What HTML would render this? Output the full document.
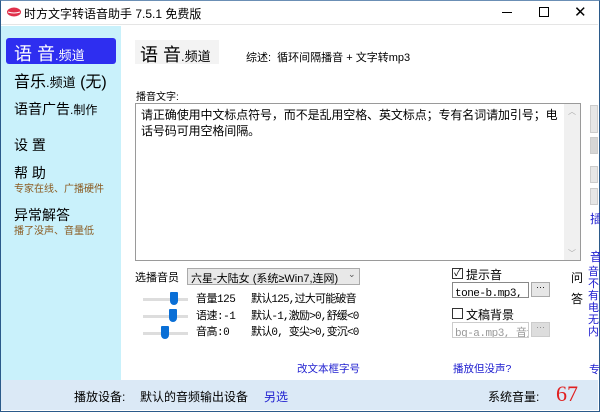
<!DOCTYPE html>
<html><head><meta charset="utf-8"><style>
*{margin:0;padding:0;box-sizing:border-box}
body{width:600px;height:412px;overflow:hidden;background:#fff;font-family:"Liberation Sans","Noto Sans CJK SC",sans-serif;position:relative;color:#000}
.a{position:absolute;white-space:nowrap}
.s{font-family:"Liberation Mono","Noto Sans CJK SC",monospace}
</style></head><body>
<div class="a" style="left:0;top:0;width:600px;height:412px;border:1px solid #2b5a8a;border-top:1px solid #6b8fb5"></div>
<div class="a" style="left:1px;top:1px;width:597px;height:24px;background:#fff;border-bottom:1px solid #e5e5e5"></div>
<svg class="a" style="left:7px;top:7px" width="14" height="10" viewBox="0 0 14 10"><ellipse cx="7" cy="5" rx="7" ry="4.5" fill="#e0304a"/><path d="M1 5 Q7 7 13 5" stroke="#fff" stroke-width="1" fill="none"/></svg>
<div class="a" style="left:24px;top:5px;font-size:12px">时方文字转语音助手 7.5.1 免费版</div>
<div class="a" style="left:502px;top:12px;width:10px;height:1px;background:#000"></div>
<div class="a" style="left:539px;top:7px;width:10px;height:10px;border:1px solid #000"></div>
<div class="a" style="left:574px;top:3px;font-size:15px;font-weight:300">✕</div>

<div class="a" style="left:1px;top:26px;width:120px;height:354px;background:#c9f1fb"></div>
<div class="a" style="left:6px;top:38px;width:110px;height:26px;background:#2e2ef0;border-radius:3px"></div>
<div class="a" style="left:14px;top:40px;font-size:18px;color:#fff">语 音<span style="font-size:13px">.频道</span></div>
<div class="a" style="left:14px;top:68px;font-size:16px">音乐<span style="font-size:13px">.频道</span> (无)</div>
<div class="a" style="left:14px;top:99px;font-size:14px">语音广告<span style="font-size:12px">.制作</span></div>
<div class="a" style="left:14px;top:135px;font-size:14px">设 置</div>
<div class="a" style="left:14px;top:163px;font-size:14px">帮 助</div>
<div class="a" style="left:14px;top:180px;font-size:10px;color:#8a5a20">专家在线、广播硬件</div>
<div class="a" style="left:14px;top:205px;font-size:14px">异常解答</div>
<div class="a" style="left:14px;top:222px;font-size:10px;color:#8a5a20">播了没声、音量低</div>

<div class="a" style="left:135px;top:40px;width:84px;height:24px;background:#f3f3f3"></div>
<div class="a" style="left:140px;top:41px;font-size:18px">语 音<span style="font-size:13px">.频道</span></div>
<div class="a" style="left:246px;top:49px;font-size:11px">综述:&nbsp; 循环间隔播音 + 文字转mp3</div>
<div class="a" style="left:136px;top:88px;font-size:10px">播音文字:</div>
<div class="a" style="left:135px;top:103px;width:446px;height:158px;border:1px solid #9a9a9a;background:#fff"></div>
<div class="a" style="left:564px;top:104px;width:16px;height:156px;background:#f0f0f0"></div>
<div class="a" style="left:568px;top:106px;font-size:8px;color:#aaa">︿</div>
<div class="a" style="left:568px;top:248px;font-size:8px;color:#aaa">﹀</div>
<div class="a" style="left:141px;top:107px;font-size:12px;line-height:16px;width:424px;white-space:normal;letter-spacing:-0.1px">请正确使用中文标点符号，而不是乱用空格、英文标点；专有名词请加引号；电话号码可用空格间隔。</div>
<div class="a" style="left:590px;top:105px;width:8px;height:28px;background:#e6e6e6;border:1px solid #ccc"></div>
<div class="a" style="left:590px;top:137px;width:8px;height:17px;background:#d6d6d6;border:1px solid #ccc"></div>
<div class="a" style="left:590px;top:166px;width:8px;height:17px;background:#e6e6e6;border:1px solid #ccc"></div>
<div class="a" style="left:590px;top:188px;width:8px;height:17px;background:#e6e6e6;border:1px solid #ccc"></div>
<div class="a" style="left:590px;top:210px;font-size:12px;color:#2020d0">插</div>
<div class="a" style="left:590px;top:248px;font-size:12px;color:#2020d0">音</div>

<div class="a" style="left:135px;top:269px;font-size:11px">选播音员</div>
<div class="a" style="left:187px;top:268px;width:173px;height:17px;background:#e8e8e8;border:1px solid #aaa"></div>
<div class="a" style="left:191px;top:270px;font-size:11px">六星-大陆女 (系统≥Win7,连网)</div>
<div class="a" style="left:348px;top:269px;font-size:9px;color:#555">⌄</div>

<div class="a" style="left:143px;top:298px;width:45px;height:3px;background:#ddd"></div>
<div class="a" style="left:170px;top:292px;width:8px;height:13px;background:#0a6fd6;border-radius:1px 1px 4px 4px"></div>
<div class="a" style="left:143px;top:315px;width:45px;height:3px;background:#ddd"></div>
<div class="a" style="left:169px;top:309px;width:8px;height:13px;background:#0a6fd6;border-radius:1px 1px 4px 4px"></div>
<div class="a" style="left:143px;top:332px;width:45px;height:3px;background:#ddd"></div>
<div class="a" style="left:161px;top:326px;width:8px;height:13px;background:#0a6fd6;border-radius:1px 1px 4px 4px"></div>
<div class="a s" style="left:196px;top:292px;font-size:11px;line-height:16.5px;letter-spacing:-0.5px">音量125<br>语速:-1<br>音高:0</div>
<div class="a s" style="left:251px;top:292px;font-size:11px;line-height:16.5px;letter-spacing:-0.8px">默认125,过大可能破音<br>默认-1,激励&gt;0,舒缓&lt;0<br>默认0, 变尖&gt;0,变沉&lt;0</div>

<div class="a" style="left:452px;top:268px;width:11px;height:11px;border:1px solid #333;font-size:10px;line-height:9px;text-align:center">✓</div>
<div class="a" style="left:466px;top:266px;font-size:12px">提示音</div>
<div class="a s" style="left:452px;top:282px;width:77px;height:16px;border:1px solid #888;font-size:11px;padding:1px 2px;overflow:hidden;letter-spacing:-0.5px">tone-b.mp3, 音</div>
<div class="a" style="left:531px;top:282px;width:19px;height:15px;background:#e6e6e6;border:1px solid #aaa;font-size:9px;text-align:center;line-height:9px">···</div>
<div class="a" style="left:452px;top:308px;width:11px;height:11px;border:1px solid #333"></div>
<div class="a" style="left:466px;top:306px;font-size:12px">文稿背景</div>
<div class="a s" style="left:452px;top:322px;width:77px;height:16px;border:1px solid #ccc;font-size:11px;padding:1px 2px;color:#999;overflow:hidden;letter-spacing:-0.5px">bg-a.mp3, 音量</div>
<div class="a" style="left:531px;top:322px;width:19px;height:15px;background:#ddd;border:1px solid #ccc;font-size:9px;text-align:center;line-height:9px;color:#888">···</div>
<div class="a" style="left:571px;top:269px;font-size:12px">问</div>
<div class="a" style="left:571px;top:290px;font-size:12px">答</div>
<div class="a" style="left:588px;top:266px;font-size:11px;line-height:12px;color:#2020d0;width:10px;white-space:normal">音不有电无内</div>

<div class="a" style="left:297px;top:361px;font-size:10.5px;color:#2020d0">改文本框字号</div>
<div class="a" style="left:453px;top:361px;font-size:10.5px;color:#2020d0">播放但没声?</div>
<div class="a" style="left:589px;top:361px;font-size:11px;color:#2020d0">专</div>

<div class="a" style="left:1px;top:380px;width:597px;height:30px;background:#dbe9f6"></div>
<div class="a" style="left:74px;top:388px;font-size:12px">播放设备:</div>
<div class="a" style="left:140px;top:388px;font-size:12px">默认的音频输出设备</div>
<div class="a" style="left:264px;top:388px;font-size:12px;color:#2020d0">另选</div>
<div class="a" style="left:488px;top:388px;font-size:12px">系统音量:</div>
<div class="a" style="left:556px;top:381px;font-size:22px;color:#e02020;font-family:'Liberation Serif',serif">67</div>
</body></html>
